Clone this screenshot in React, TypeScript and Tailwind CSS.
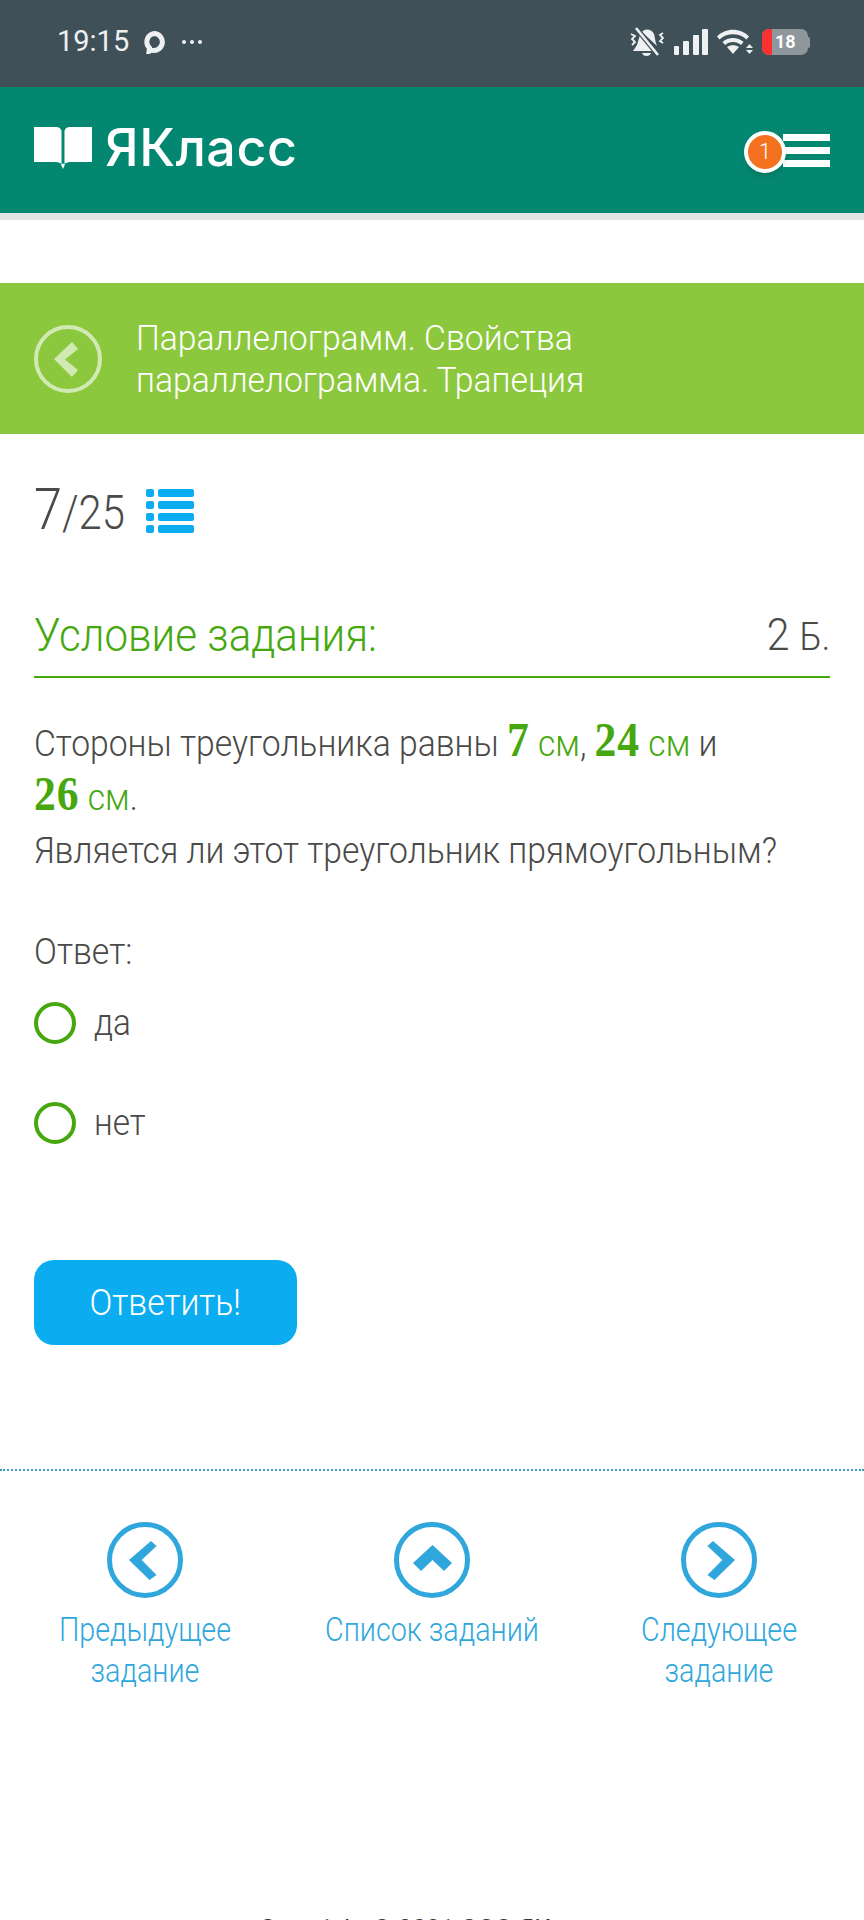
function BookLogo() {
  return (
    <svg width="58" height="44" viewBox="0 0 58 44" fill="white">
      <path d="M0 1h22c3 0 5 1.500 5.500 4v33c-1-1-3-2-5.500-2H0z" />
      <path d="M58 1H36c-3 0-5 1.500-5.500 4v33c1-1 3-2 5.500-2h22z" />
      <path d="M27 38.500 29 43l2-4.500-2-1z" />
    </svg>
  );
}

function BellOff() {
  return (
    <svg width="36" height="30" viewBox="0 0 36 30" fill="#eef0f1">
      <path d="M11 8 8 18l-4 6h22L12 8z" />
      <path d="M13 5c3-4 10-3 12 2 1 3 1 8 3 12z" />
      <path d="M13 26h9c-1 4-8 4-9 0z" />
      <path d="M7 1l22 27" stroke="#3f5058" strokeWidth="5" />
      <path d="M7 1l22 27" stroke="#eef0f1" strokeWidth="2.600" />
      <path d="M2 7l4 2-3 3 3 3-3 3M34 6l-3 2 3 3-3 3 3 2" fill="none" stroke="#eef0f1" strokeWidth="1.800" />
    </svg>
  );
}

function Signal() {
  return (
    <svg width="34" height="26" viewBox="0 0 34 26" fill="#eef0f1">
      <rect x="0" y="17" width="5" height="9" rx="1" />
      <rect x="9" y="12" width="6" height="14" rx="1" />
      <rect x="19" y="6" width="6" height="20" rx="1" />
      <rect x="28" y="0" width="6" height="26" rx="1" />
    </svg>
  );
}

function Wifi() {
  return (
    <svg width="36" height="26" viewBox="0 0 36 26" fill="#eef0f1">
      <path d="M0 7.500C8-1.500 24-1.500 32 7.500l-2.500 3C22.500 3.500 9.500 3.500 2.500 10.500z" />
      <path d="M5.500 13C11 7.500 21 7.500 26.500 13L24 16c-4.500-4-11.500-4-16 0z" />
      <path d="M10 18c3.500-2.500 8.500-2.500 12 0l-6 7z" />
      <path d="M29 19l3.500-4 3.500 4zM29 21l3.500 4 3.500-4z" />
    </svg>
  );
}

function Battery() {
  return (
    <div className="flex items-center">
      <div className="relative flex h-[26px] w-[46px] items-center overflow-hidden rounded-[7px] bg-[#8f979c]">
        <div className="h-full w-[10px] bg-[#fb3131]" />
        <span className="ml-[3px] text-[18px] font-bold leading-none text-white">18</span>
      </div>
      <div className="h-[11px] w-[2px] rounded-r-sm bg-[#8f979c]" />
    </div>
  );
}

function ListIcon() {
  const rows = [0, 1, 2, 3];
  return (
    <div className="flex w-[48px] flex-col gap-[4px]">
      {rows.map((r) => (
        <div key={r} className="flex gap-[4px]">
          <div className="h-[8px] w-[8px] rounded-[2px] bg-[#0badf0]" />
          <div className="h-[8px] flex-1 rounded-[2px] bg-[#0badf0]" />
        </div>
      ))}
    </div>
  );
}

function Radio({ label }: { label: string }) {
  return (
    <div className="flex h-[42px] items-center gap-[18px]">
      <div className="h-[42px] w-[42px] rounded-full border-[4px] border-[#46a80e]" />
      <span className="origin-left scale-x-[0.9]">{label}</span>
    </div>
  );
}

function Num({ children }: { children: string }) {
  return <span className="font-['Liberation_Serif',serif] text-[48px] font-bold leading-none tracking-[1px] text-[#46a80e]">{children}</span>;
}

function Unit({ children }: { children: string }) {
  return <span className="text-[#46a80e]">{children}</span>;
}

// outline of the arrow inside the round 76px buttons
const navItems = [
  { points: '22,38 44,19 49.500,24 34.700,38 49.500,53 42.500,58', label: 'Предыдущее задание', width: 'w-[220px]' },
  { points: '38.500,23 58,41 50,49 38.500,38 27,49 19,41', label: 'Список заданий', width: 'w-[280px]' },
  { points: '54,38 32,19 26.500,24 41.300,38 26.500,53 33.500,58', label: 'Следующее задание', width: 'w-[220px]' },
];

export default function App() {
  return (
    <div className="relative flex h-[1920px] flex-col overflow-hidden bg-white font-['Roboto',sans-serif] font-light text-[#4a4a48]">
      {/* status bar */}
      <div className="flex h-[87px] shrink-0 items-center bg-[#3f5058] pb-[3px] pl-[57px] pr-[54px] text-[#eef0f1]">
        <span className="text-[29px] font-normal">19:15</span>
        <svg className="ml-[13px]" width="24" height="24" viewBox="0 0 24 24" fill="none" stroke="#eef0f1" strokeWidth="5">
          <path d="M12 3.500a8.500 8.500 0 1 1-3 16.500l-2 1.500.5-3.500A8.500 8.500 0 0 1 12 3.500z" />
        </svg>
        <span className="ml-[16px] flex gap-[4px]">
          <i className="h-[4px] w-[4px] rounded-full bg-[#eef0f1]" />
          <i className="h-[4px] w-[4px] rounded-full bg-[#eef0f1]" />
          <i className="h-[4px] w-[4px] rounded-full bg-[#eef0f1]" />
        </span>
        <div className="ml-auto flex items-center gap-[9px]">
          <BellOff />
          <Signal />
          <Wifi />
          <Battery />
        </div>
      </div>

      {/* header */}
      <div className="flex h-[126px] shrink-0 items-center justify-between bg-[#048770] pl-[34px] pr-[34px]">
        <div className="mt-[-4px] flex items-center gap-[13px]">
          <BookLogo />
          <span className="font-['Inter',sans-serif] text-[52px] font-medium leading-none tracking-[0.5px] text-white">ЯКласс</span>
        </div>
        <div className="relative flex w-[47px] flex-col gap-[6px]">
          <div className="h-[7px] bg-white" />
          <div className="h-[7px] bg-white" />
          <div className="h-[7px] bg-white" />
          <div className="absolute left-[-39px] top-[-3px] flex h-[42px] w-[42px] items-center justify-center rounded-full border-[4px] border-white bg-[#f47120] text-[22px] text-white shadow-md">
            1
          </div>
        </div>
      </div>
      <div className="h-[7px] shrink-0 bg-[#e3e4e6]" />

      {/* topic band */}
      <div className="mt-[63px] flex h-[151px] shrink-0 items-center gap-[34px] bg-[#8cc83e] px-[34px]">
        <svg className="shrink-0" width="68" height="68" viewBox="0 0 68 68" fill="#d1e9b2">
          <circle cx="34" cy="34" r="32" fill="none" stroke="#d1e9b2" strokeWidth="4" />
          <polygon points="20,34 38,17 44,24 31,34.500 44,45 38,52" />
        </svg>
        <div className="origin-left scale-x-[0.948] whitespace-nowrap text-[35.500px] leading-[42px] text-white">
          Параллелограмм. Свойства
          <br />
          параллелограмма. Трапеция
        </div>
      </div>

      <div className="flex flex-1 flex-col px-[34px]">
        {/* progress */}
        <div className="mt-[40px] flex items-center gap-[7px]">
          <div className="flex origin-left scale-x-[0.87] items-baseline">
            <span className="text-[58px] leading-[70px]">7</span>
            <span className="text-[48px] leading-[70px]">/25</span>
          </div>
          <ListIcon />
        </div>

        {/* task title */}
        <div className="mt-[46px] flex h-[84px] items-center justify-between border-b-2 border-[#46a80e]">
          <span className="origin-left scale-x-[0.915] whitespace-nowrap text-[46px] text-[#46a80e]">Условие задания:</span>
          <span className="origin-right scale-x-[0.93] whitespace-nowrap text-[44px]">
            2 <span className="text-[38px]">Б.</span>
          </span>
        </div>

        {/* question */}
        <div className="mt-[38px] origin-left scale-x-[0.91] whitespace-nowrap text-[37px] leading-[53px]">
          Стороны треугольника равны <Num>7</Num> <Unit>см</Unit>, <Num>24</Num> <Unit>см</Unit> и
          <br />
          <Num>26</Num> <Unit>см</Unit>.
          <br />
          Является ли этот треугольник прямоугольным?
        </div>

        <div className="mt-[48px] origin-left scale-x-[0.913] text-[37px] leading-[53px]">Ответ:</div>
        <div className="mt-[24px] flex flex-col gap-[58px] text-[37px]">
          <Radio label="да" />
          <Radio label="нет" />
        </div>

        <button className="mt-[116px] flex h-[85px] w-[263px] items-center justify-center rounded-[20px] bg-[#0badf0] text-[37px] font-light text-white">
          <span className="scale-x-[0.91]">Ответить!</span>
        </button>
      </div>

      {/* nav */}
      <div className="absolute left-0 top-[1469px] w-[864px] border-t-2 border-dotted border-[#3d9ac0]" />
      <div className="absolute left-0 top-[1522px] w-[864px] px-[1px]">
        <div className="grid w-full grid-cols-3 text-[#2fa7dc]">
          {navItems.map(({ points, label, width }) => (
            <div key={label} className="flex flex-col items-center">
              <svg width="76" height="76" viewBox="0 0 76 76" fill="#2fa7dc">
                <circle cx="38" cy="38" r="35.500" fill="none" stroke="#2fa7dc" strokeWidth="5" />
                <polygon points={points} />
              </svg>
              <div className={`mt-[11px] scale-x-[0.87] text-center text-[33px] leading-[41px] ${width}`}>{label}</div>
            </div>
          ))}
        </div>
      </div>

      <div className="absolute left-0 top-[1911px] w-[864px] text-center text-[25px] font-normal text-[#333]">
        Copyright © 2021 ООО ЯКласс
      </div>
    </div>
  );
}
